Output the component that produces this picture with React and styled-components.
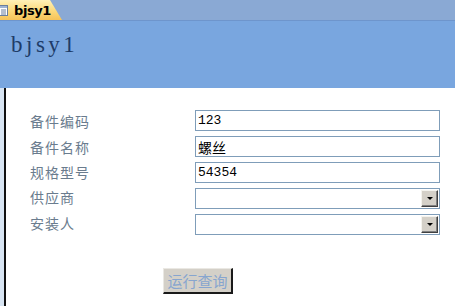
import React from 'react';
import styled, { createGlobalStyle } from 'styled-components';

const GlobalStyle = createGlobalStyle`
  html, body {
    margin: 0;
    padding: 0;
    background: #ffffff;
    overflow: hidden;
  }
  body {
    font-family: "Liberation Sans", "Noto Sans CJK SC", sans-serif;
  }
`;

const Page = styled.div`
  width: 455px;
  height: 306px;
  display: flex;
  flex-direction: column;
  background: #ffffff;
`;

const TabBar = styled.div`
  height: 20px;
  background: #8aa9d4;
  border-bottom: 1px solid #6e95cc;
  display: flex;
  align-items: flex-end;
`;

const Tab = styled.div`
  height: 20px;
  width: 62px;
  display: flex;
  align-items: center;
  gap: 6px;
  background: linear-gradient(#fff1b8, #fbd97a 55%, #f6c358);
  clip-path: polygon(0 0, 50px 0, 62px 20px, 0 20px);
  box-sizing: border-box;
`;

const TabIcon = styled.div`
  width: 9px;
  height: 11px;
  margin-left: -1px;
  display: flex;
`;

const TabLabel = styled.span`
  font-family: "DejaVu Sans", "Liberation Sans", sans-serif;
  font-weight: bold;
  font-size: 13px;
  color: #000000;
  letter-spacing: -0.4px;
`;

const Header = styled.div`
  height: 67px;
  background: #79a6df;
  padding: 10px 0 0 11px;
  box-sizing: border-box;
`;

const Title = styled.div`
  font-family: "Liberation Serif", "DejaVu Serif", serif;
  font-size: 23px;
  line-height: 28px;
  letter-spacing: 3.5px;
  color: #1e3c68;
`;

const Body = styled.div`
  flex: 1;
  display: flex;
`;

const LeftEdge = styled.div`
  width: 4px;
  background: #d8e5f3;
  border-right: 2px solid #111111;
`;

const Content = styled.div`
  flex: 1;
  padding: 22px 0 0 24px;
  display: flex;
  flex-direction: column;
`;

const Form = styled.div`
  display: grid;
  grid-template-columns: 165px 245px;
  grid-auto-rows: 21px;
  row-gap: 5px;
`;

const Label = styled.div`
  font-family: "Noto Sans CJK SC", sans-serif;
  font-size: 14px;
  color: #6a7c8e;
  display: flex;
  align-items: center;
  letter-spacing: 1px;
  transform: translateY(${({ shift }) => shift}px);
`;

const Field = styled.div`
  box-sizing: border-box;
  height: 21px;
  border: 1px solid #7f9db9;
  background: #ffffff;
  display: flex;
  align-items: center;
  padding: 0 1px 0 2px;
  color: #000000;
`;

const FieldText = styled.span`
  flex: 1;
  font-family: ${({ cjk }) => (cjk ? '"Noto Sans CJK SC", sans-serif' : '"Liberation Mono", monospace')};
  font-size: ${({ cjk }) => (cjk ? '14px' : '13px')};
`;

const DropButton = styled.div`
  width: 17px;
  height: 17px;
  box-sizing: border-box;
  background: #d4d0c8;
  border-top: 1px solid #f4f3ee;
  border-left: 1px solid #f4f3ee;
  border-right: 1px solid #404040;
  border-bottom: 1px solid #404040;
  display: flex;
  align-items: center;
  justify-content: center;
  box-shadow: inset -1px -1px 0 #808080;
`;

const Arrow = styled.div`
  width: 0;
  height: 0;
  border-left: 3px solid transparent;
  border-right: 3px solid transparent;
  border-top: 3px solid #000000;
`;

const RunButton = styled.div`
  margin: 33px 0 0 133px;
  width: 70px;
  height: 26px;
  box-sizing: border-box;
  background: #d4d0c8;
  border-top: 1px solid #eae8e3;
  border-left: 1px solid #eae8e3;
  border-right: 2px solid #1a1a1a;
  border-bottom: 2px solid #1a1a1a;
  display: flex;
  align-items: center;
  justify-content: center;
  font-family: "Noto Sans CJK SC", sans-serif;
  font-size: 15px;
  color: #87a5cf;
`;

const rows = [
  { label: '备件编码', value: '123', shift: 0 },
  { label: '备件名称', value: '螺丝', cjk: true, shift: 0 },
  { label: '规格型号', value: '54354', shift: -1 },
  { label: '供应商', select: true, shift: -2 },
  { label: '安装人', select: true, shift: -2 },
];

const App = () => {
  return (
    <Page>
      <GlobalStyle />
      <TabBar>
        <Tab>
          <TabIcon>
            <svg width="9" height="11" viewBox="0 0 9 11">
              <rect x="0.5" y="0.5" width="8" height="10" fill="#ffffff" stroke="#6a7f9c" />
              <rect x="1" y="1" width="7" height="2" fill="#9fb4d3" />
              <line x1="2" y1="5" x2="7" y2="5" stroke="#6a7f9c" />
              <line x1="2" y1="7" x2="7" y2="7" stroke="#6a7f9c" />
              <line x1="2" y1="9" x2="7" y2="9" stroke="#6a7f9c" />
            </svg>
          </TabIcon>
          <TabLabel>bjsy1</TabLabel>
        </Tab>
      </TabBar>
      <Header>
        <Title>bjsy1</Title>
      </Header>
      <Body>
        <LeftEdge />
        <Content>
          <Form>
            {rows.map((r) => (
              <React.Fragment key={r.label}>
                <Label shift={r.shift}>{r.label}</Label>
                <Field>
                  <FieldText cjk={r.cjk}>{r.value}</FieldText>
                  {r.select && (
                    <DropButton>
                      <Arrow />
                    </DropButton>
                  )}
                </Field>
              </React.Fragment>
            ))}
          </Form>
          <RunButton>运行查询</RunButton>
        </Content>
      </Body>
    </Page>
  );
};

export default App;
